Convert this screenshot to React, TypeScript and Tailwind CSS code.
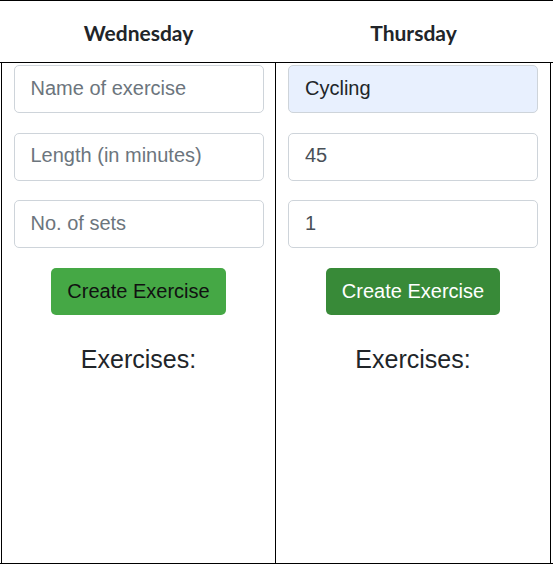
const DAYS = [
    {name: "Wednesday", values: ["", "", ""], autofill: false, active: false},
    {name: "Thursday", values: ["Cycling", "45", "1"], autofill: true, active: true},
];

const PLACEHOLDERS = ["Name of exercise", "Length (in minutes)", "No. of sets"];

function DayColumn({day, first}: { day: typeof DAYS[number]; first: boolean }) {
    return (
        <div
            className={`w-[275px] flex flex-col items-center px-3 pt-[2px] border-black border-r ${first ? "ml-[1px] border-l" : ""}`}>
            {PLACEHOLDERS.map((ph, i) => (
                <input
                    key={ph}
                    readOnly
                    placeholder={ph}
                    value={day.values[i]}
                    className={`w-[250px] h-[48px] mb-[19.5px] px-4 pb-[2px] text-[20px] rounded-[5px] border border-[#ced4da] outline-none placeholder:text-[#6c757d] ${
                        i === 0 && day.autofill ? "bg-[#e8f0fe] text-[#212529]" : "bg-white text-[#495057]"
                    }`}
                />
            ))}
            <button
                className={`h-[47px] px-4 text-[20px] rounded-[5px] ${
                    day.active ? "bg-[#388a38] text-white" : "bg-[#45a845] text-[#111]"
                }`}>
                Create Exercise
            </button>
            <h3 className="mt-[29px] text-[25px] leading-[30px] text-[#212529]">Exercises:</h3>
        </div>
    );
}

export default function App() {
    return (
        <main className="w-[553px] h-[568px] bg-white border-t border-black font-['Liberation_Sans',Arial,sans-serif]">
            {/* Day headers */}
            <div className="flex h-[61px]">
                {DAYS.map((day, i) => (
                    <div
                        key={day.name}
                        className={`w-[275px] flex items-center justify-center pt-[3px] font-['Lato',sans-serif] font-bold text-[21px] text-[#212529] ${i === 0 ? "ml-[1px]" : ""}`}>
                        {day.name}
                    </div>
                ))}
            </div>

            {/* Forms */}
            <div className="flex h-[502px] border-y border-black">
                {DAYS.map((day, i) => (
                    <DayColumn key={day.name} day={day} first={i === 0}/>
                ))}
            </div>
        </main>
    );
}
